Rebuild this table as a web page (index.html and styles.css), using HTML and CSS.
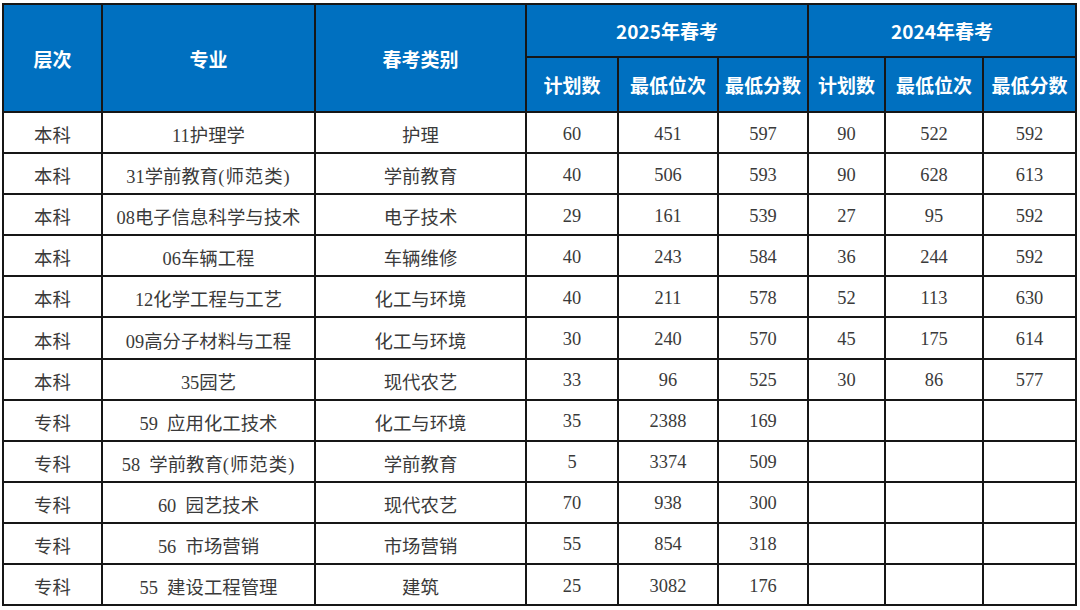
FILE: index.html
```html
<!DOCTYPE html>
<html lang="zh-CN">
<head>
<meta charset="utf-8">
<title>春考录取数据</title>
<link rel="stylesheet" href="styles.css">
</head>
<body>
<table class="score-table">
  <colgroup>
    <col class="c-level"><col class="c-major"><col class="c-cat">
    <col class="c-plan"><col class="c-rank"><col class="c-score">
    <col class="c-plan2"><col class="c-rank2"><col class="c-score2">
  </colgroup>
  <thead>
    <tr class="h1">
      <th rowspan="2">层次</th>
      <th rowspan="2">专业</th>
      <th rowspan="2">春考类别</th>
      <th colspan="3">2025年春考</th>
      <th colspan="3">2024年春考</th>
    </tr>
    <tr class="h2">
      <th>计划数</th><th>最低位次</th><th>最低分数</th>
      <th>计划数</th><th>最低位次</th><th>最低分数</th>
    </tr>
  </thead>
  <tbody>
    <tr><td>本科</td><td>11护理学</td><td>护理</td><td>60</td><td>451</td><td>597</td><td>90</td><td>522</td><td>592</td></tr>
    <tr><td>本科</td><td>31学前教育<span class="paren">(师范类)</span></td><td>学前教育</td><td>40</td><td>506</td><td>593</td><td>90</td><td>628</td><td>613</td></tr>
    <tr><td>本科</td><td>08电子信息科学与技术</td><td>电子技术</td><td>29</td><td>161</td><td>539</td><td>27</td><td>95</td><td>592</td></tr>
    <tr><td>本科</td><td>06车辆工程</td><td>车辆维修</td><td>40</td><td>243</td><td>584</td><td>36</td><td>244</td><td>592</td></tr>
    <tr><td>本科</td><td>12化学工程与工艺</td><td>化工与环境</td><td>40</td><td>211</td><td>578</td><td>52</td><td>113</td><td>630</td></tr>
    <tr><td>本科</td><td>09高分子材料与工程</td><td>化工与环境</td><td>30</td><td>240</td><td>570</td><td>45</td><td>175</td><td>614</td></tr>
    <tr><td>本科</td><td>35园艺</td><td>现代农艺</td><td>33</td><td>96</td><td>525</td><td>30</td><td>86</td><td>577</td></tr>
    <tr><td>专科</td><td>59&nbsp; 应用化工技术</td><td>化工与环境</td><td>35</td><td>2388</td><td>169</td><td></td><td></td><td></td></tr>
    <tr><td>专科</td><td>58&nbsp; 学前教育<span class="paren">(师范类)</span></td><td>学前教育</td><td>5</td><td>3374</td><td>509</td><td></td><td></td><td></td></tr>
    <tr><td>专科</td><td>60&nbsp; 园艺技术</td><td>现代农艺</td><td>70</td><td>938</td><td>300</td><td></td><td></td><td></td></tr>
    <tr><td>专科</td><td>56&nbsp; 市场营销</td><td>市场营销</td><td>55</td><td>854</td><td>318</td><td></td><td></td><td></td></tr>
    <tr><td>专科</td><td>55&nbsp; 建设工程管理</td><td>建筑</td><td>25</td><td>3082</td><td>176</td><td></td><td></td><td></td></tr>
  </tbody>
</table>
</body>
</html>
```
FILE: styles.css
```css
html, body {
  margin: 0;
  padding: 0;
  background: #ffffff;
}

body {
  padding: 3px 0 0 2px;
}

.score-table {
  border-collapse: collapse;
  table-layout: fixed;
  width: 1075px;
  font-family: "Liberation Serif", "Noto Sans CJK SC", serif;
  font-size: 18.4px;
  color: #3a3a3a;
}

.c-level { width: 99px; }
.c-major { width: 213px; }
.c-cat { width: 211px; }
.c-plan { width: 92px; }
.c-rank { width: 100px; }
.c-score { width: 90px; }
.c-plan2 { width: 77px; }
.c-rank2 { width: 98px; }
.c-score2 { width: 93px; }

.score-table th,
.score-table td {
  border: 2px solid #161616;
  text-align: center;
  vertical-align: middle;
  padding: 0;
  white-space: nowrap;
  overflow: hidden;
}

.score-table th {
  background: #0070c0;
  color: #ffffff;
  font-family: "Noto Sans CJK SC", "Noto Sans", sans-serif;
  font-weight: 700;
  font-size: 19px;
}

.h1 { height: 53px; }
.h2 { height: 55px; }

.score-table tbody tr { height: 41.1px; }

.score-table td {
  font-weight: 400;
  padding-top: 3px;
}

.paren {
  letter-spacing: 1px;
}
```
